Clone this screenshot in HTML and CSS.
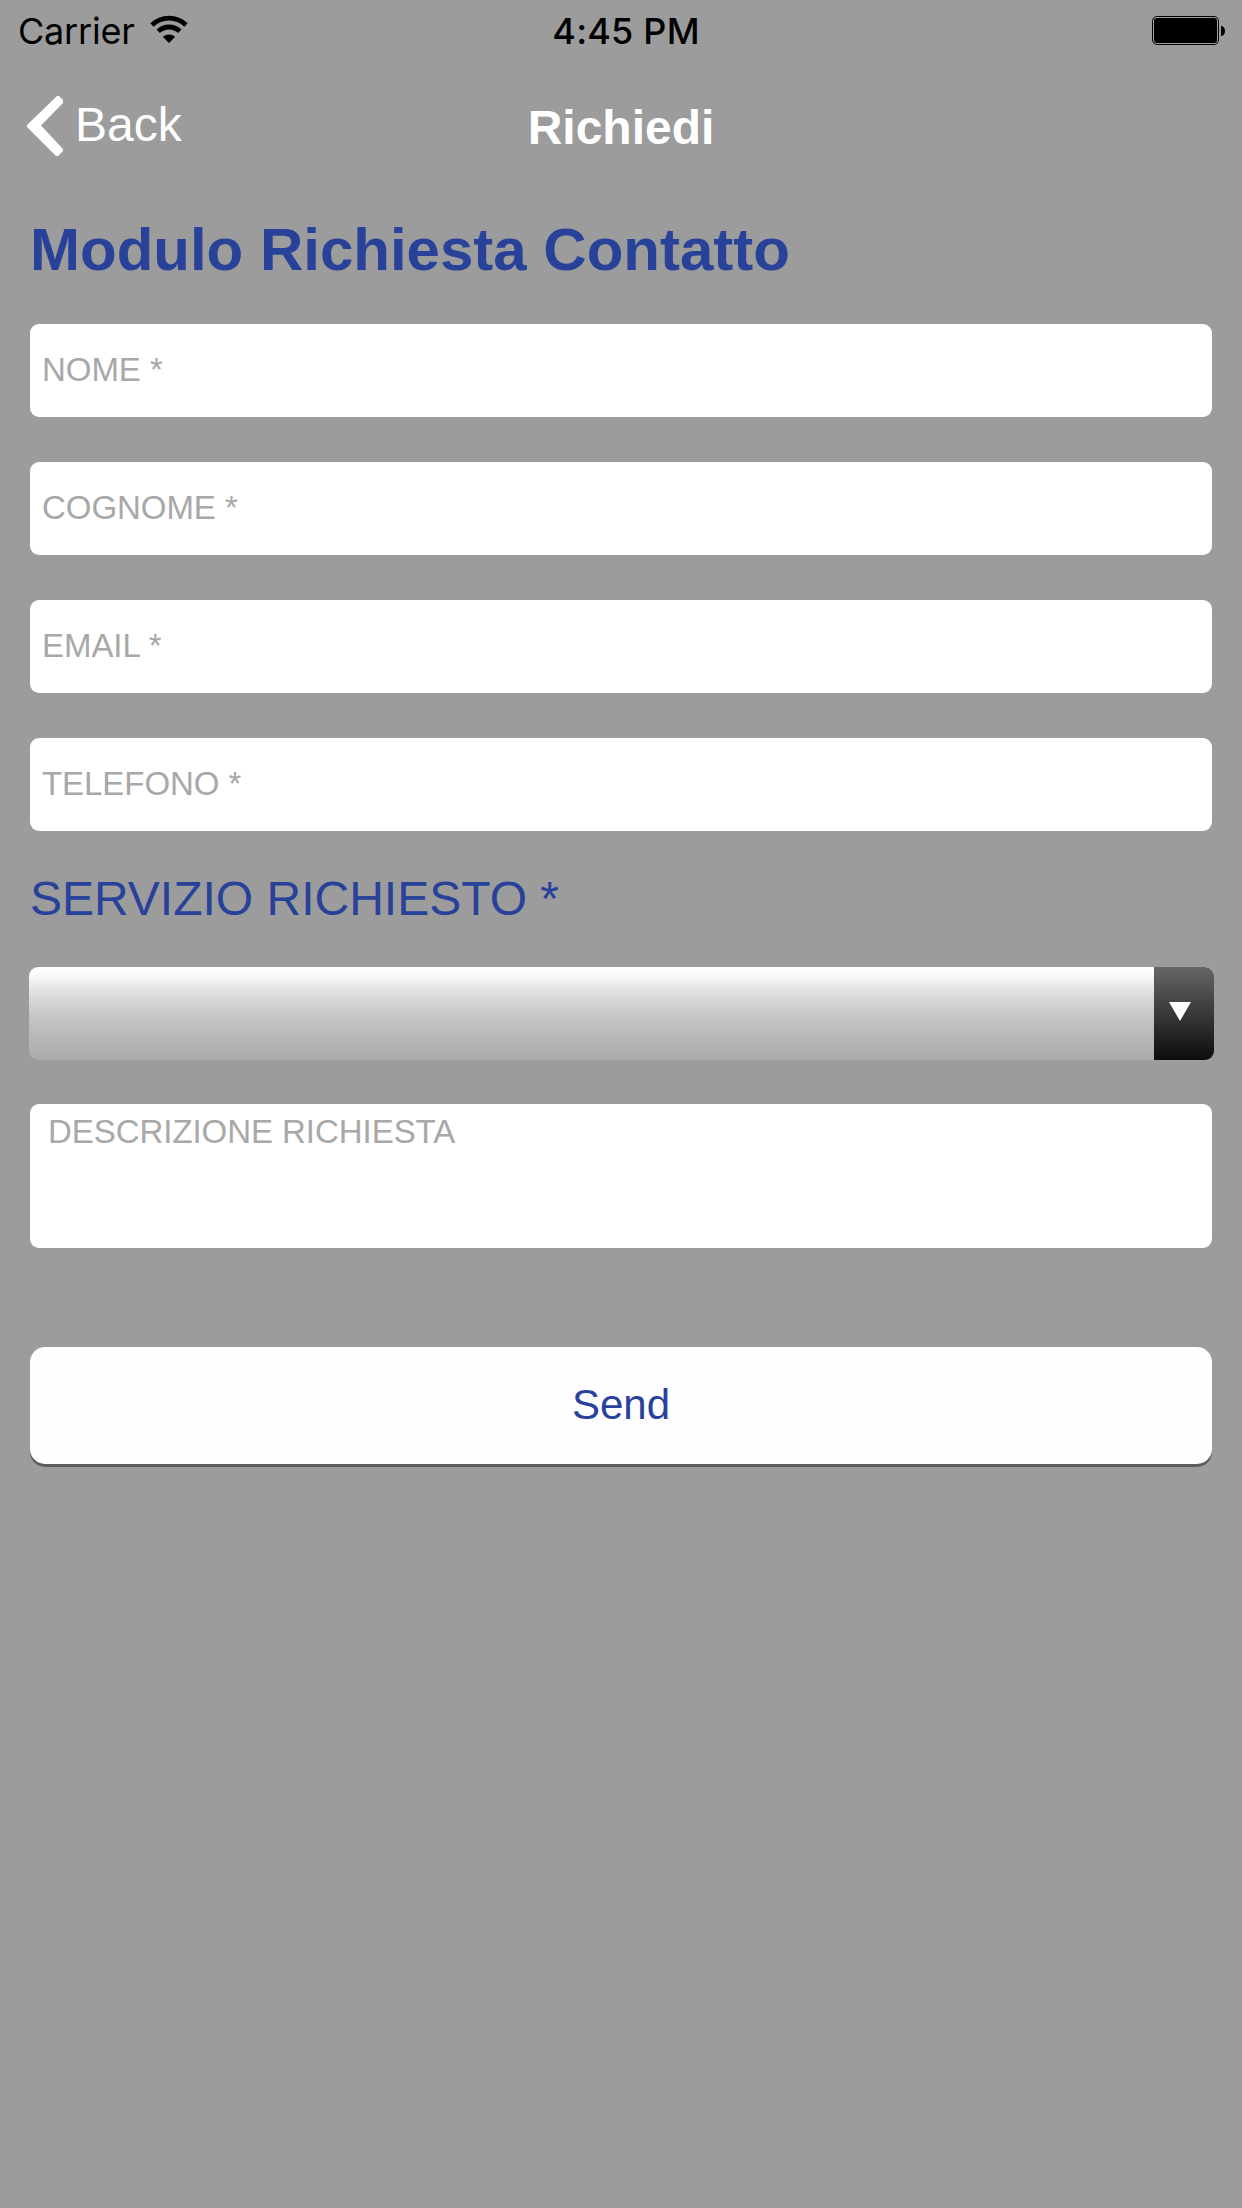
FILE: index.html
```html
<!DOCTYPE html>
<html lang="it">
<head>
<meta charset="utf-8">
<title>Richiedi</title>
<link rel="stylesheet" href="styles.css">
</head>
<body>
<header class="status">
  <div class="status-left">
    <span class="carrier">Carrier</span>
    <svg class="wifi" width="38" height="29" viewBox="0 0 38 29">
      <path d="M2 10A24.500 24.500 0 0 1 36 10M8.200 16.200A16 16 0 0 1 29.800 16.200" fill="none" stroke="#000" stroke-width="4.800"/>
      <path d="M12.800 21.800A9.500 9.500 0 0 1 25.200 21.800L19 28Z"/>
    </svg>
  </div>
  <span class="time">4:45 PM</span>
  <svg class="battery" width="74" height="30" viewBox="0 0 74 30">
    <rect x=".5" y=".5" width="66" height="28" rx="4.500" fill="none" stroke="#000"/>
    <rect x="2" y="2" width="63" height="25" rx="3"/>
    <path d="M69 10C74.300 10 74.300 20 69 20Z"/>
  </svg>
</header>
<nav class="nav">
  <a class="back">
    <svg class="chevron" width="36" height="60" viewBox="0 0 36 60">
      <path d="M30 0H32L36 4V7L14 29.500L36 53V55L31 60H29L0 31V29Z" fill="#fff"/>
    </svg>
    <span>Back</span>
  </a>
  <span class="title">Richiedi</span>
</nav>
<main class="form">
  <h1 class="heading">Modulo Richiesta Contatto</h1>
  <div class="fields">
    <label class="field"><span class="hint">NOME *</span></label>
    <label class="field"><span class="hint">COGNOME *</span></label>
    <label class="field"><span class="hint">EMAIL *</span></label>
    <label class="field"><span class="hint">TELEFONO *</span></label>
  </div>
  <div class="label"><span>SERVIZIO RICHIESTO *</span></div>
  <div class="select">
    <div class="select-arrow">
      <svg width="22" height="19" viewBox="0 0 22 19"><path d="M0 0H22L11 19Z" fill="#fff"/></svg>
    </div>
  </div>
  <label class="area"><span class="hint">DESCRIZIONE RICHIESTA</span></label>
  <button class="send" type="button"><span>Send</span></button>
</main>
</body>
</html>
```
FILE: styles.css
```css
* { box-sizing: border-box; }
body {
  margin: 0;
  min-height: 2208px;
  background: #9c9c9c;
  font-family: "Liberation Sans", Arial, sans-serif;
}
.status {
  display: grid;
  grid-template-columns: 1fr auto 1fr;
  height: 62px;
  padding: 0 16px 0 18px;
  font: 36px/62px Inter, sans-serif;
  color: #000;
}
.status-left { display: flex; align-items: flex-start; gap: 15px; }
.carrier { letter-spacing: -0.2px; }
.wifi { margin-top: 15px; }
.time { font-weight: 500; padding-left: 8px; letter-spacing: 0.2px; }
.battery { justify-self: end; margin-top: 16px; }
.nav {
  display: grid;
  grid-template-columns: 1fr auto 1fr;
  align-items: center;
  height: 132px;
  padding: 0 27px 2px;
  font-size: 48px;
  color: #fff;
}
.back { display: flex; align-items: center; gap: 12px; padding-bottom: 6px; }
.chevron { margin-top: 4px; }
.title { font-weight: bold; }
.form { display: flex; flex-direction: column; padding: 0 30px; }
.heading {
  margin: 0 0 18px;
  font-size: 60px;
  line-height: 112px;
  color: #28429a;
}
.fields { display: flex; flex-direction: column; gap: 45px; }
.field {
  display: flex;
  align-items: center;
  height: 93px;
  padding: 0 12px 2px;
  border-radius: 9px;
  background: #fff;
}
.hint { font-size: 33px; letter-spacing: -0.05px; color: #a8a8a8; }
.label { font-size: 48px; line-height: 136px; color: #28429a; }
.select {
  display: flex;
  justify-content: flex-end;
  height: 93px;
  margin: 0 -1.5px;
  border-radius: 9px;
  overflow: hidden;
  background: linear-gradient(#fff 0%, #fff 4%, #dcdcdc 30%, #c4c4c4 55%, #aaa 100%);
}
.select-arrow {
  display: flex;
  justify-content: center;
  padding: 35px 8px 0 0;
  width: 60px;
  background: linear-gradient(#666, #0c0c0c);
}
.area {
  height: 144px;
  margin-top: 44px;
  padding: 9px 18px;
  border-radius: 9px;
  background: #fff;
}
.send {
  height: 117px;
  margin-top: 99px;
  padding: 0 0 2px;
  border: 0;
  border-radius: 15px;
  background: #fefdff;
  box-shadow: 0 3px 0 #5c5c5c;
  font: 42px "Liberation Sans", Arial, sans-serif;
  color: #28429a;
}
```
